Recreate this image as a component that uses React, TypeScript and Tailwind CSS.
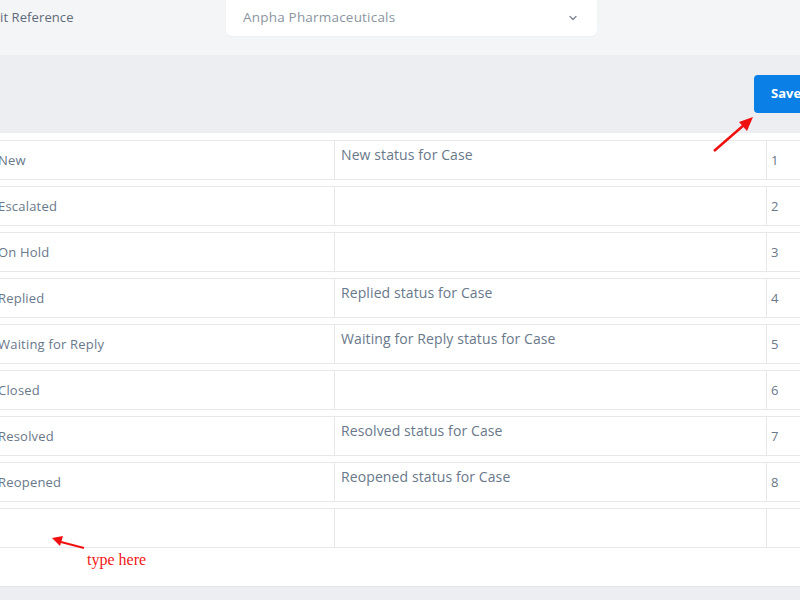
import React from "react";
import { ChevronDown } from "lucide-react";

const rows = [
  { name: "New", desc: "New status for Case", order: "1" },
  { name: "Escalated", desc: "", order: "2" },
  { name: "On Hold", desc: "", order: "3" },
  { name: "Replied", desc: "Replied status for Case", order: "4" },
  { name: "Waiting for Reply", desc: "Waiting for Reply status for Case", order: "5" },
  { name: "Closed", desc: "", order: "6" },
  { name: "Resolved", desc: "Resolved status for Case", order: "7" },
  { name: "Reopened", desc: "Reopened status for Case", order: "8" },
  { name: "", desc: "", order: "" },
];

export default function App() {
  return (
    <div
      className="relative w-[800px] h-[600px] overflow-hidden bg-[#eceef2] text-[13px] text-[#69788a]"
      style={{ fontFamily: '"Open Sans", sans-serif' }}
    >
      {/* Top form row */}
      <div className="h-[55px] bg-[#f4f5f7] flex items-start">
        <div className="w-[226px] h-[35px] flex items-center text-[#5f6b7a] tracking-[0.1px]">it Reference</div>
        <div className="w-[371px] h-[36px] bg-white rounded-b-[6px] shadow-[0_1px_2px_rgba(0,0,0,0.03)] flex items-center pl-[17px] pr-[18px]">
          <span className="flex-1 text-[#8b95a1] text-[13.5px] tracking-[0.2px] -mt-[2px]">Anpha Pharmaceuticals</span>
          <ChevronDown size={12} strokeWidth={2.5} className="text-[#7b8591]" />
        </div>
      </div>

      {/* Actions band */}
      <div className="h-[78px] flex justify-end items-start">
        <button className="mt-[20px] w-[60px] -mr-[14px] h-[38px] rounded-[4px] bg-[#0a7fe6] text-white font-bold text-[13px] text-left pl-[17px]">
          Save
        </button>
      </div>

      {/* Table */}
      <div className="bg-white h-[454px] border-b border-[#e1e4e9] pt-[7px] flex flex-col gap-[6px]">
        {rows.map((r, i) => (
          <div key={i} className="-ml-[12px] w-[830px] h-[40px] flex border-y border-[#e6e8eb]">
            <div className="w-[347px] flex items-center pl-[10px] pt-[2px] tracking-[0.2px] border-r border-[#e6e8eb]">{r.name}</div>
            <div className="w-[432px] pt-[5px] pl-[6px] leading-[18px] text-[14px] tracking-[0.1px] border-r border-[#e6e8eb]">{r.desc}</div>
            <div className="flex-1 flex items-center pl-[4px] pt-[2px]">{r.order}</div>
          </div>
        ))}
      </div>

      {/* Annotations */}
      <svg className="absolute left-0 top-0 pointer-events-none" width="800" height="600">
        <line x1="714" y1="151" x2="744" y2="125" stroke="#f01010" strokeWidth="2.5" />
        <polygon points="753,117 739,122 747,131" fill="#f01010" />
        <line x1="84" y1="548" x2="61" y2="542" stroke="#f01010" strokeWidth="2" />
        <polygon points="52,538 63,536 60,546" fill="#f01010" />
      </svg>
      <div
        className="absolute left-[87px] top-[550px] text-[16px] text-[#f01818] leading-[20px]"
        style={{ fontFamily: '"Liberation Serif", serif' }}
      >
        type here
      </div>
    </div>
  );
}
